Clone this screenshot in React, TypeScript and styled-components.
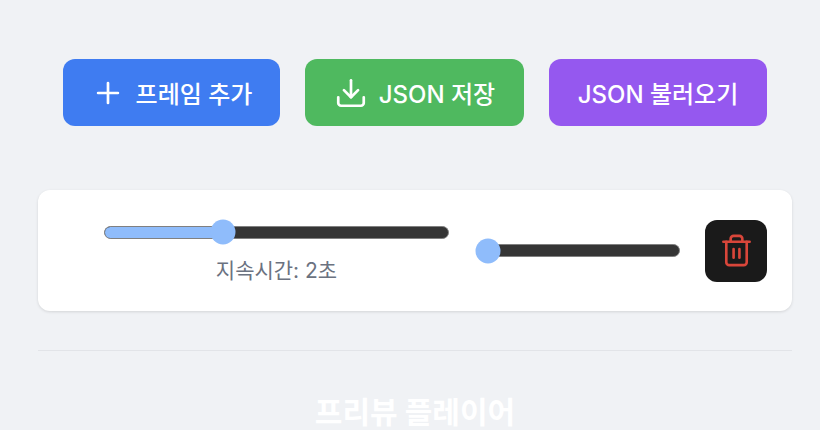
import styled, { createGlobalStyle } from "styled-components";
import { Download, Plus, Trash2 } from "lucide-react";

const GlobalStyle = createGlobalStyle`
  html, body {
    margin: 0;
    height: 100%;
    overflow: hidden;
    background: #f0f2f5;
    font-family: Inter, "Noto Sans CJK KR", sans-serif;
  }
`;

const Page = styled.div`
  padding: 59px 28px 0 38px;
`;

const Toolbar = styled.div`
  display: flex;
  justify-content: center;
  gap: 25px;
  margin-bottom: 64px;
`;

const ActionButton = styled.button<{ $bg: string; $w: number }>`
  display: flex;
  align-items: center;
  justify-content: center;
  gap: 11px;
  width: ${(p) => p.$w}px;
  height: 67px;
  border: 0;
  border-radius: 12px;
  background: ${(p) => p.$bg};
  color: #fff;
  font-family: inherit;
  font-size: 24px;
  font-weight: 500;
  padding: 0;
`;

const FrameCard = styled.div`
  display: flex;
  align-items: center;
  height: 121px;
  box-sizing: border-box;
  padding: 0 25px 0 66px;
  background: #fff;
  border-radius: 12px;
  box-shadow: 0 1px 3px rgba(0, 0, 0, 0.12);
`;

const DurationColumn = styled.div`
  display: flex;
  flex-direction: column;
  align-items: center;
  gap: 19px;
  width: 345px;
  margin: 8px 31px 0 0;
`;

const Track = styled.div<{ $w: number }>`
  position: relative;
  width: ${(p) => p.$w}px;
  height: 13px;
  box-sizing: border-box;
  background: #353535;
  border: 1px solid #808080;
  border-radius: 7px;
`;

const Fill = styled.div`
  height: 100%;
  background: #8fbcfb;
  border-radius: 6px 0 0 6px;
`;

const Thumb = styled.div`
  position: absolute;
  top: 50%;
  width: 25px;
  height: 25px;
  background: #8fbcfb;
  border-radius: 50%;
  transform: translate(-50%, -50%);
`;

const DurationLabel = styled.span`
  color: #6b7280;
  font-size: 21px;
  line-height: 26px;
`;

const DeleteButton = styled.button`
  display: flex;
  align-items: center;
  justify-content: center;
  width: 62px;
  height: 62px;
  margin-left: 25px;
  padding: 0;
  border: 0;
  border-radius: 12px;
  background: #1a1a1a;
  color: #d9463a;
`;

const Divider = styled.hr`
  height: 1px;
  margin: 39px 0 0;
  border: 0;
  background: #e2e4e8;
`;

const PreviewTitle = styled.h2`
  margin: 42px 0 0;
  text-align: center;
  color: #fff;
  font-size: 30px;
  font-weight: 700;
  line-height: 38px;
`;

export default function App() {
  return (
    <Page>
      <GlobalStyle />
      <Toolbar>
        <ActionButton $bg="#3f7cf1" $w={217}>
          <Plus size={34} strokeWidth={1.9} />
          프레임 추가
        </ActionButton>
        <ActionButton $bg="#4fb95f" $w={219}>
          <Download size={34} strokeWidth={1.9} />
          JSON 저장
        </ActionButton>
        <ActionButton $bg="#9558ef" $w={218}>
          JSON 불러오기
        </ActionButton>
      </Toolbar>
      <FrameCard>
        <DurationColumn>
          <Track $w={345}>
            <Fill style={{ width: "34%" }} />
            <Thumb style={{ left: "34.5%" }} />
          </Track>
          <DurationLabel>지속시간: 2초</DurationLabel>
        </DurationColumn>
        <Track $w={200}>
          <Thumb style={{ left: "3.5%" }} />
        </Track>
        <DeleteButton>
          <Trash2 size={35} strokeWidth={1.8} />
        </DeleteButton>
      </FrameCard>
      <Divider />
      <PreviewTitle>프리뷰 플레이어</PreviewTitle>
    </Page>
  );
}
